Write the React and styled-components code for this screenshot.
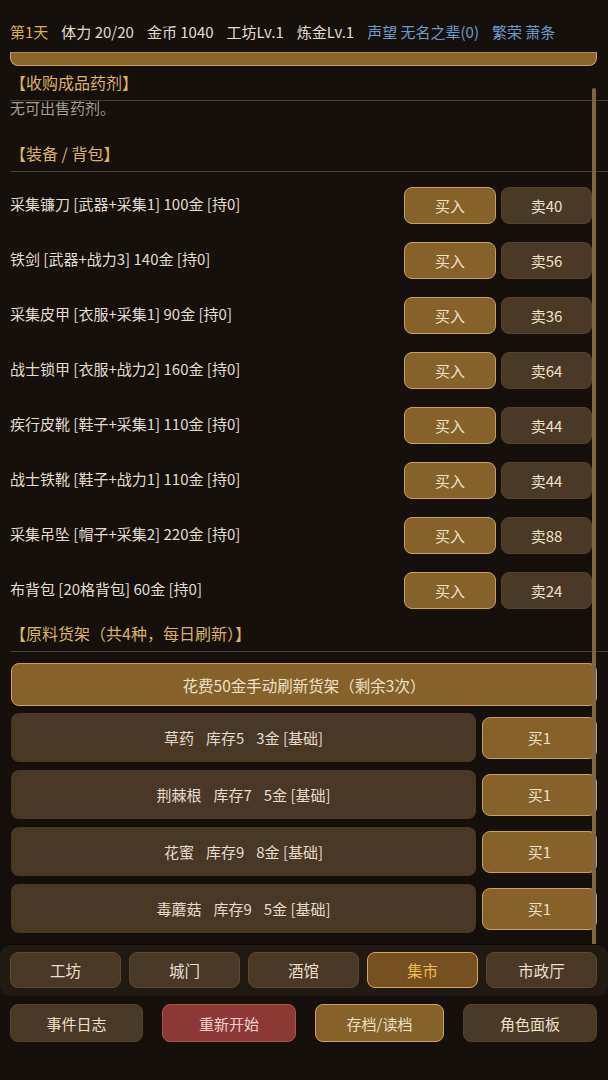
import React from 'react'
import styled, { createGlobalStyle } from 'styled-components'

const Global = createGlobalStyle`
  body {
    margin: 0;
    background: #15100b;
    font-family: "Noto Sans CJK SC", "Noto Sans", sans-serif;
    color: #e2dccf;
  }
`

const Page = styled.div`
  width: 608px;
  height: 1080px;
  display: flex;
  flex-direction: column;
  overflow: hidden;
`

const Header = styled.div`
  height: 52px;
  box-sizing: border-box;
  padding: 22px 10px 0;
  display: flex;
  gap: 13px;
  font-size: 15px;
  line-height: 20px;
  white-space: nowrap;
`

const Stat = styled.span`
  color: ${p => (p.$tone === 'gold' ? '#d9b04e' : p.$tone === 'blue' ? '#6e9acb' : '#e0dbd2')};
`

const ScrollArea = styled.div`
  position: relative;
  height: 892px;
  overflow: hidden;
`

const Scrollbar = styled.div`
  position: absolute;
  right: 12px;
  top: 36px;
  bottom: 0;
  width: 4px;
  border-radius: 2px 2px 0 0;
  background: #7d6644;
`

const CutStrip = styled.div`
  height: 12px;
  margin: 0 11px 0 10px;
  background: #8a652b;
  border: 1.5px solid #c9a257;
  border-top-color: #b08c4a;
  border-radius: 0 0 8px 8px;
`

const SectionTitle = styled.div`
  margin-top: ${p => p.$top}px;
  margin-left: 10px;
  padding-bottom: 7px;
  border-bottom: 1px solid #4a3f33;
  font-size: 16px;
  line-height: 22px;
  color: #d9b266;
`

const Muted = styled.div`
  padding-left: 10px;
  font-size: 15px;
  line-height: 14px;
  color: #a39d94;
`

const ItemList = styled.div`
  display: flex;
  flex-direction: column;
  gap: 18px;
  padding: 15px 16px 0 10px;
`

const ItemRow = styled.div`
  display: flex;
  align-items: center;
  gap: 5px;
`

const ItemName = styled.div`
  flex: 1;
  font-size: 15px;
  color: #e2dccf;
  margin-top: -4px;
`

const Btn = styled.div`
  box-sizing: border-box;
  display: flex;
  align-items: center;
  justify-content: center;
  width: ${p => p.$w}px;
  height: ${p => p.$h}px;
  border-radius: 8px;
  font-size: 15px;
  background: ${p => (p.$kind === 'gold' ? '#87612a' : p.$kind === 'red' ? '#8c3835' : '#4b3927')};
  border: ${p =>
    p.$kind === 'gold' ? '1.5px solid #c9a257' : p.$kind === 'red' ? '1px solid #a8524c' : '1px solid #55412d'};
  color: ${p => (p.$kind === 'red' ? '#f0d2ca' : '#ede0c8')};
`

const RefreshBtn = styled(Btn)`
  width: auto;
  margin: 11px 11px 0 11px;
  font-size: 15.5px;
`

const ShelfList = styled.div`
  display: flex;
  flex-direction: column;
  gap: 8px;
  padding: 7px 11px 0 11px;
`

const ShelfRow = styled.div`
  display: flex;
  align-items: center;
  gap: 6px;
`

const ShelfInfo = styled.div`
  flex: 1;
  height: 49px;
  display: flex;
  align-items: center;
  justify-content: center;
  gap: 12px;
  border-radius: 8px;
  background: #4a3826;
  font-size: 15px;
  color: #e2dccf;
`

const NavPanel = styled.div`
  display: flex;
  gap: 8px;
  padding: 7px 11px 8px 10px;
  background: #211a13;
  border-top: 1px solid #0c0906;
  border-radius: 10px;
`

const NavBtn = styled.div`
  box-sizing: border-box;
  flex: 1;
  height: 36px;
  display: flex;
  align-items: center;
  justify-content: center;
  border-radius: 8px;
  font-size: 15.5px;
  background: ${p => (p.$active ? '#765020' : '#4a3826')};
  border: ${p => (p.$active ? '1.5px solid #d4a855' : '1px solid #5c4731')};
  color: ${p => (p.$active ? '#eab84c' : '#e8dfcf')};
`

const ActionRow = styled.div`
  display: flex;
  justify-content: space-between;
  padding: 8px 11px 0 10px;
`

const items = [
  ['采集镰刀 [武器+采集1] 100金 [持0]', 40],
  ['铁剑 [武器+战力3] 140金 [持0]', 56],
  ['采集皮甲 [衣服+采集1] 90金 [持0]', 36],
  ['战士锁甲 [衣服+战力2] 160金 [持0]', 64],
  ['疾行皮靴 [鞋子+采集1] 110金 [持0]', 44],
  ['战士铁靴 [鞋子+战力1] 110金 [持0]', 44],
  ['采集吊坠 [帽子+采集2] 220金 [持0]', 88],
  ['布背包 [20格背包] 60金 [持0]', 24],
]

const shelf = [
  ['草药', 5, 3],
  ['荆棘根', 7, 5],
  ['花蜜', 9, 8],
  ['毒蘑菇', 9, 5],
]

const tabs = ['工坊', '城门', '酒馆', '集市', '市政厅']

export default function App() {
  return (
    <Page>
      <Global />
      <Header>
        <Stat $tone="gold">第1天</Stat>
        <Stat>体力 20/20</Stat>
        <Stat>金币 1040</Stat>
        <Stat>工坊Lv.1</Stat>
        <Stat>炼金Lv.1</Stat>
        <Stat $tone="blue">声望 无名之辈(0)</Stat>
        <Stat $tone="blue">繁荣 萧条</Stat>
      </Header>

      <ScrollArea>
        <CutStrip />
        <SectionTitle $top={5}>【收购成品药剂】</SectionTitle>
        <Muted>无可出售药剂。</Muted>

        <SectionTitle $top={27}>【装备 / 背包】</SectionTitle>
        <ItemList>
          {items.map(([name, sell]) => (
            <ItemRow key={name}>
              <ItemName>{name}</ItemName>
              <Btn $kind="gold" $w={92} $h={37}>买入</Btn>
              <Btn $w={91} $h={37}>卖{sell}</Btn>
            </ItemRow>
          ))}
        </ItemList>

        <SectionTitle $top={13}>【原料货架（共4种，每日刷新）】</SectionTitle>
        <RefreshBtn $kind="gold" $h={43}>花费50金手动刷新货架（剩余3次）</RefreshBtn>
        <ShelfList>
          {shelf.map(([name, stock, price]) => (
            <ShelfRow key={name}>
              <ShelfInfo>
                <span>{name}</span>
                <span>库存{stock}</span>
                <span>{price}金 [基础]</span>
              </ShelfInfo>
              <Btn $kind="gold" $w={115} $h={42}>买1</Btn>
            </ShelfRow>
          ))}
        </ShelfList>
        <Scrollbar />
      </ScrollArea>

      <NavPanel>
        {tabs.map(t => (
          <NavBtn key={t} $active={t === '集市'}>{t}</NavBtn>
        ))}
      </NavPanel>

      <ActionRow>
        <Btn $w={133} $h={38}>事件日志</Btn>
        <Btn $kind="red" $w={134} $h={38}>重新开始</Btn>
        <Btn $kind="gold" $w={129} $h={38}>存档/读档</Btn>
        <Btn $w={134} $h={38}>角色面板</Btn>
      </ActionRow>
    </Page>
  )
}
